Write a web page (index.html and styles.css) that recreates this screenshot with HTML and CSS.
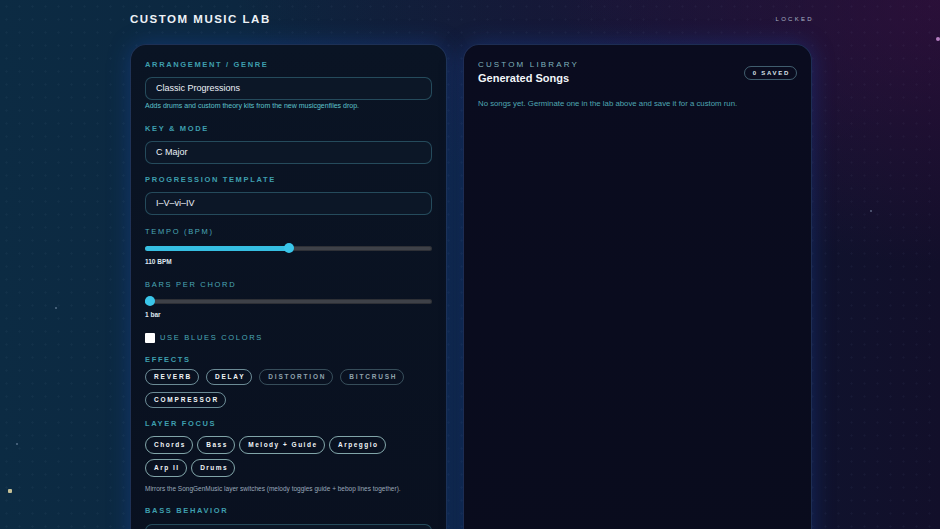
FILE: index.html
```html
<!DOCTYPE html>
<html lang="en">
<head>
<meta charset="utf-8">
<title>Custom Music Lab</title>
<link rel="stylesheet" href="styles.css">
</head>
<body>
<div class="stars">
  <span class="star star-pink"></span>
  <span class="star star-gold"></span>
  <span class="star star-a"></span>
  <span class="star star-b"></span>
  <span class="star star-c"></span>
</div>
<div class="page">
  <header class="topbar">
    <h1 class="title">CUSTOM MUSIC LAB</h1>
    <span class="status">LOCKED</span>
  </header>
  <main class="grid">
    <section class="panel panel-lab">
      <div class="field">
        <div class="label">ARRANGEMENT / GENRE</div>
        <div class="input">Classic Progressions</div>
        <div class="hint hint-teal">Adds drums and custom theory kits from the new musicgenfiles drop.</div>
      </div>
      <div class="field f-key">
        <div class="label">KEY &amp; MODE</div>
        <div class="input">C Major</div>
      </div>
      <div class="field f-prog">
        <div class="label">PROGRESSION TEMPLATE</div>
        <div class="input">I–V–vi–IV</div>
      </div>
      <div class="field f-tempo">
        <div class="label label-light">TEMPO (BPM)</div>
        <div class="slider" style="--p:0.5">
          <div class="track"><div class="fill"></div></div>
          <div class="thumb"></div>
        </div>
        <div class="value">110 BPM</div>
      </div>
      <div class="field f-bars">
        <div class="label label-light">BARS PER CHORD</div>
        <div class="slider" style="--p:0">
          <div class="track"><div class="fill"></div></div>
          <div class="thumb"></div>
        </div>
        <div class="value">1 bar</div>
      </div>
      <label class="check">
        <span class="box"></span>
        <span class="check-text">USE BLUES COLORS</span>
      </label>
      <div class="field f-effects">
        <div class="label">EFFECTS</div>
        <div class="chips chips-effects">
          <span class="chip">REVERB</span>
          <span class="chip">DELAY</span>
          <span class="chip chip-off">DISTORTION</span>
          <span class="chip chip-off">BITCRUSH</span>
          <span class="chip">COMPRESSOR</span>
        </div>
      </div>
      <div class="field f-layers">
        <div class="label">LAYER FOCUS</div>
        <div class="chips chips-layers">
          <span class="chip chip-layer">Chords</span>
          <span class="chip chip-layer">Bass</span>
          <span class="chip chip-layer">Melody + Guide</span>
          <span class="chip chip-layer">Arpeggio</span>
          <span class="chip chip-layer">Arp II</span>
          <span class="chip chip-layer">Drums</span>
        </div>
        <div class="hint hint-grey">Mirrors the SongGenMusic layer switches (melody toggles guide + bebop lines together).</div>
      </div>
      <div class="field f-bass">
        <div class="label">BASS BEHAVIOR</div>
        <div class="input input-tall"></div>
      </div>
    </section>
    <section class="panel panel-library">
      <div class="lib-head">
        <div class="lib-titles">
          <div class="lib-kicker">CUSTOM LIBRARY</div>
          <h2 class="lib-title">Generated Songs</h2>
        </div>
        <span class="pill">0 SAVED</span>
      </div>
      <p class="empty">No songs yet. Germinate one in the lab above and save it for a custom run.</p>
    </section>
  </main>
</div>
</body>
</html>
```
FILE: styles.css
```css
* { box-sizing: border-box; }
html, body { margin: 0; padding: 0; }
body {
  width: 940px;
  height: 529px;
  overflow: hidden;
  position: relative;
  font-family: "Liberation Sans", Arial, sans-serif;
  color: #e8eef5;
  background-color: #0b1a30;
  background-image:
    radial-gradient(circle, rgba(150,180,210,0.055) 0.8px, transparent 1.3px),
    radial-gradient(ellipse 40% 50% at 100% 0%, rgba(58,16,66,0.6), transparent 100%),
    radial-gradient(ellipse 40% 35% at 65% 0%, rgba(36,18,60,0.45), transparent 100%),
    linear-gradient(90deg, #0c2b43 0%, #0c2740 25%, #0d1f38 50%, #0e1630 75%, #120f2a 100%);
  background-size: 13px 13px, 100% 100%, 100% 100%, 100% 100%;
}

.stars { position: absolute; inset: 0; pointer-events: none; }
.star { position: absolute; width: 2px; height: 2px; border-radius: 50%; background: #9fb6d0; opacity: 0.5; }
.star-pink { left: 936px; top: 37px; width: 4px; height: 4px; background: #c58bd0; opacity: 0.9; }
.star-gold { left: 8px; top: 489px; width: 4px; height: 4px; background: #d8cfa0; border-radius: 1px; opacity: 0.9; }
.star-a { left: 55px; top: 307px; }
.star-b { left: 16px; top: 443px; }
.star-c { left: 870px; top: 210px; }

.page { width: 682px; margin-left: 130px; position: relative; }

.topbar {
  display: flex;
  justify-content: space-between;
  align-items: center;
  padding-top: 12px;
  height: 26px;
}
.title {
  margin: 0;
  font-size: 11.5px;
  line-height: 14px;
  font-weight: 700;
  letter-spacing: 1.5px;
  color: #eef2f7;
}
.status {
  font-size: 6px;
  line-height: 14px;
  letter-spacing: 2.3px;
  color: #aab4c6;
  margin-right: -2px;
}

.grid {
  margin-top: 18px;
  display: grid;
  grid-template-columns: 317px 349px;
  gap: 16px;
  align-items: stretch;
}

.panel {
  border: 1px solid rgba(70,110,185,0.35);
  border-radius: 16px;
  box-shadow: 0 0 22px rgba(30,80,190,0.35);
}
.panel-lab {
  padding: 16px 14px 30px;
  background: linear-gradient(180deg, #0a1424 0%, #09101f 100%);
}
.panel-library {
  padding: 14px 14px;
  background: linear-gradient(180deg, #0a0c1f 0%, #090c1d 100%);
}

.field { display: flex; flex-direction: column; }
.label {
  font-size: 7.5px;
  line-height: 8px;
  font-weight: 700;
  letter-spacing: 1.65px;
  color: #3e9fae;
  margin-bottom: 8px;
}
.label-light { font-weight: 400; color: #4aa8b6; }

.input {
  height: 23px;
  border: 1px solid rgba(80,160,180,0.38);
  border-radius: 7px;
  background: #0c1727;
  padding: 0 10px;
  font-size: 9px;
  line-height: 21px;
  font-weight: 500;
  color: #edf2f8;
}
.input-tall { height: 40px; }

.hint {
  margin-top: 2px;
  font-size: 6.5px;
  line-height: 8px;
}
.hint-teal { color: #5ec3cc; font-size: 7px; }
.hint-grey { color: #9aa8ba; margin-top: 8px; }

.f-key { margin-top: 15px; }
.f-prog { margin-top: 12px; }
.f-tempo { margin-top: 13px; }
.f-bars { margin-top: 15px; }
.f-tempo .label, .f-bars .label { margin-bottom: 7px; letter-spacing: 1.7px; }

.slider { position: relative; height: 10px; display: flex; align-items: center; }
.track {
  position: relative;
  width: 100%;
  height: 5px;
  border-radius: 3px;
  background: #3e4148;
  box-shadow: inset 0 0 0 1px rgba(0,0,0,0.25);
  overflow: hidden;
}
.fill {
  position: absolute;
  left: 0; top: 0; bottom: 0;
  width: calc(5px + var(--p) * (100% - 10px));
  background: #36bfe2;
}
.thumb {
  position: absolute;
  top: 0;
  left: calc(var(--p) * (100% - 10px));
  width: 10px;
  height: 10px;
  border-radius: 50%;
  background: #3ac6ea;
}
.value {
  margin-top: 5px;
  font-size: 6.5px;
  line-height: 8px;
  font-weight: 700;
  color: #dfe7ef;
}

.check {
  margin-top: 14px;
  display: flex;
  align-items: center;
  gap: 5px;
  height: 10px;
}
.box {
  width: 10px;
  height: 10px;
  background: #ffffff;
  border-radius: 1px;
}
.check-text {
  font-size: 7.5px;
  line-height: 10px;
  letter-spacing: 1.7px;
  color: #4aa8b6;
}

.f-effects { margin-top: 13px; }
.f-effects .label { margin-bottom: 5px; }
.chips { display: flex; flex-wrap: wrap; }
.chips-effects { gap: 7px 7px; }
.chip {
  height: 16px;
  border: 1px solid rgba(160,205,212,0.65);
  border-radius: 9px;
  padding: 0 6px 0 8px;
  font-size: 6.5px;
  line-height: 14px;
  font-weight: 700;
  letter-spacing: 1.8px;
  color: #f1f5f8;
}
.chip-off {
  border-color: rgba(110,150,160,0.45);
  color: #8fa2ad;
}

.f-layers { margin-top: 12px; }
.chips-layers { gap: 5px 4.5px; max-width: 250px; }
.chip-layer {
  height: 18px;
  line-height: 16px;
  letter-spacing: 1.5px;
  padding: 0 6px 0 8px;
  border-color: rgba(170,215,215,0.75);
  border-radius: 10px;
}

.f-bass { margin-top: 14px; }
.f-bass .label { margin-bottom: 9px; }

.lib-head {
  display: flex;
  justify-content: space-between;
  align-items: center;
}
.lib-titles { display: flex; flex-direction: column; }
.lib-kicker {
  font-size: 8px;
  line-height: 9px;
  letter-spacing: 2.15px;
  color: #7fb2bc;
  padding-top: 0.5px;
}
.lib-title {
  margin: 2.5px 0 0;
  font-size: 11px;
  line-height: 14px;
  font-weight: 700;
  color: #f2f5f9;
}
.pill {
  height: 14px;
  padding: 0 6px 0 8px;
  border: 1px solid rgba(110,160,175,0.55);
  border-radius: 8px;
  font-size: 6px;
  line-height: 12px;
  font-weight: 700;
  letter-spacing: 1.7px;
  color: #d9e2ea;
  margin-top: 2px;
}
.empty {
  margin: 14px 0 0;
  font-size: 7.8px;
  line-height: 10px;
  color: #4fa6b2;
}
```
